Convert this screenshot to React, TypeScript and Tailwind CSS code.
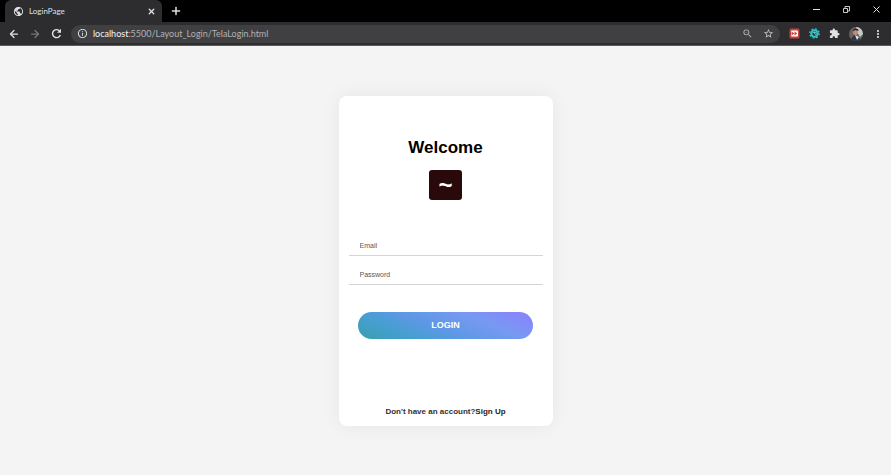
import { ArrowLeft, ArrowRight, Plus, X } from "lucide-react";
import { MdPublic, MdExtension, MdMoreVert, MdStarBorder, MdZoomOut, MdInfoOutline } from "react-icons/md";

function BrowserChrome() {
  return (
    <header className="bg-black font-['Lato','Open_Sans',sans-serif] text-[#dfe1e5]">
      <div className="flex h-[22px] items-stretch">
        <div className="ml-[5px] flex w-[157px] items-center rounded-t-md bg-[#2d2d2f] pr-[6px] pl-2">
          <MdPublic className="size-[11px]" />
          <span className="ml-[5px] flex-1 text-[8px] leading-none">LoginPage</span>
          <button aria-label="Close tab" className="flex"><X className="size-[9px]" strokeWidth={3.5} /></button>
        </div>
        <button aria-label="New tab" className="ml-2 flex items-center"><Plus className="size-3" strokeWidth={3} /></button>
        <div className="ml-auto flex items-center gap-[21px] pr-[10px] pb-[3px]">
          <button aria-label="Minimize">
            <svg className="size-[9px]" viewBox="0 0 9 9" stroke="currentColor"><path d="M1 4.5h7" /></svg>
          </button>
          <button aria-label="Restore">
            <svg className="size-[9px]" viewBox="0 0 9 9" fill="none" stroke="currentColor" strokeWidth="0.9"><path d="M1.500 3.500h4v4h-4zM3 3v-1.500h4.500v4.500h-1.500" /></svg>
          </button>
          <button aria-label="Close window">
            <svg className="size-[9px]" viewBox="0 0 9 9" stroke="currentColor"><path d="M1.500 1.500l6 6M7.500 1.500l-6 6" /></svg>
          </button>
        </div>
      </div>
      <div className="flex h-6 items-center border-b border-[#5a5a5c] bg-[#2d2d2f] pr-[7px] pl-2">
        <nav className="flex items-center gap-[9px]">
          <button aria-label="Back"><ArrowLeft className="size-3" strokeWidth={2.500} /></button>
          <button aria-label="Forward" className="text-[#77787a]"><ArrowRight className="size-3" strokeWidth={2.500} /></button>
          <button aria-label="Reload">
            <svg className="size-[13px]" viewBox="0 0 13 13" fill="none" stroke="currentColor" strokeWidth="1.400"><path d="M10.300 8A4 4 0 119.300 3.700L10.500 5" /><path d="M11 1.800v4H7z" fill="currentColor" stroke="none" /></svg>
          </button>
        </nav>
        <div className="ml-2 flex h-[18px] flex-1 items-center rounded-full bg-[#404042] pr-[6px] pl-[6px]">
          <MdInfoOutline className="size-[11px]" />
          <span className="ml-[5px] flex-1 text-[9px] leading-none text-[#b0b2b5]"><span className="text-[#f4f4f5]">localhost</span>:5500/Layout_Login/TelaLogin.html</span>
          <button aria-label="Zoom" className="text-[#b5b7ba]"><MdZoomOut className="size-[11px]" /></button>
          <button aria-label="Bookmark" className="ml-[10px] text-[#c5c7ca]"><MdStarBorder className="size-[11px]" /></button>
        </div>
        <div className="ml-[9px] flex items-center gap-[9px]">
          <button aria-label="Red extension">
            <svg className="size-[11px]" viewBox="0 0 11 11"><rect x="0.500" y="0.500" width="10" height="10" rx="1.500" fill="#c9413f" /><rect x="2" y="2.500" width="7" height="6" rx="1" fill="#fff" /><path d="M2.500 3.500L5.300 5.500 2.500 7.500zM5.500 3.500L8.300 5.500 5.500 7.500z" fill="#d23a38" /></svg>
          </button>
          <button aria-label="Teal extension">
            <svg className="size-[11px]" viewBox="0 0 11 11"><circle cx="5.500" cy="5.500" r="3.200" fill="none" stroke="#2fc4cd" strokeWidth="2" /><circle cx="5.500" cy="5.500" r="4.700" fill="none" stroke="#2fc4cd" strokeWidth="1.300" strokeDasharray="1.850 1.840" /><path d="M3.500 5l2-1 2 1-1.500 2M5.500 4v2" fill="none" stroke="#5bdde3" strokeWidth="0.8" /></svg>
          </button>
          <button aria-label="Extensions"><MdExtension className="size-[11px]" /></button>
          <button aria-label="Profile">
            <svg className="size-[14px]" viewBox="0 0 14 14"><circle cx="7" cy="7" r="7" fill="#6c625e" /><path d="M7 0a7 7 0 017 7l-3 3-3-5z" fill="#c4cbd0" /><circle cx="6.500" cy="5.500" r="2.500" fill="#c18d76" /><path d="M3.500 4q1-3 5.500-2l.5 2-3-1z" fill="#241d1d" /><path d="M2 12l3-4 4 1 2 3.500Q7 15.500 2 12z" fill="#29364c" /><path d="M6 8l2 5 2-3z" fill="#e8eaec" /></svg>
          </button>
          <button aria-label="Menu"><MdMoreVert className="size-3" /></button>
        </div>
      </div>
    </header>
  );
}

export default function App() {
  return (
    <div className="flex min-h-screen flex-col bg-[#f4f4f4]">
      <BrowserChrome />
      <main className="flex flex-1 flex-col items-center px-4 pt-[50px] pb-[49px] font-['Liberation_Sans',Arial,sans-serif]">
        <form className="flex w-full max-w-[214px] flex-1 flex-col items-center rounded-lg bg-white px-[10px] pt-10 pb-2 shadow-[0_0_20px_rgba(0,0,0,0.06)]" onSubmit={(e) => e.preventDefault()}>
          <h1 className="text-[17px] leading-6 font-bold text-black">Welcome</h1>
          <div className="mt-[10px] flex h-[30px] w-[33px] items-center justify-center rounded-[3px] bg-[#290909] text-2xl leading-none font-bold text-white">~</div>
          <input type="email" aria-label="Email" placeholder="Email" className="mt-[35px] h-[21px] w-full border-b border-[#d4d4d4] px-[11px] text-[7px] outline-none placeholder:text-[#555]" />
          <input type="password" aria-label="Password" placeholder="Password" className="mt-2 h-[21px] w-full border-b border-[#d4d4d4] px-[11px] text-[7px] outline-none placeholder:text-[#555]" />
          <button className="mt-[27px] h-[27px] w-[175px] rounded-full bg-[linear-gradient(22deg,#3b9eae,#459fcf_24%,#5b98e3_42%,#7799f2_70%,#8688fa_90%)] text-[9px] font-bold text-white">LOGIN</button>
          <p className="mt-auto text-[8px] leading-3 font-bold text-[#382e2e]">Don't have an account?<a href="#signup" className="text-[#281919]">Sign Up</a></p>
        </form>
      </main>
    </div>
  );
}
